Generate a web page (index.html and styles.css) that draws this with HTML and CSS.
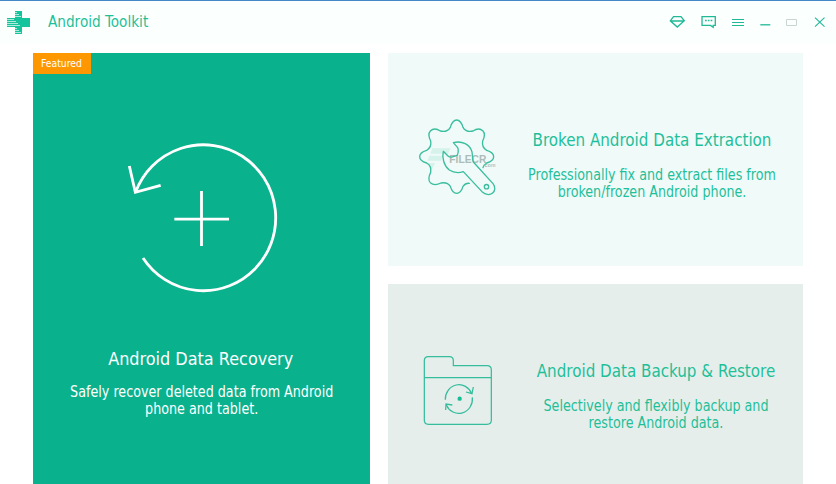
FILE: index.html
```html
<!DOCTYPE html>
<html lang="en">
<head>
<meta charset="utf-8">
<title>Android Toolkit</title>
<link rel="stylesheet" href="styles.css">
</head>
<body>
<div class="window">
  <header class="titlebar">
    <svg class="logo" viewBox="0 0 24 24">
      <path fill="#15c39c" d="M8 0h7v7h8v9h-8v7H8v-7H0V7h8z"/>
      <path fill="none" stroke="#d5f5ec" stroke-width=".8" d="M8 1.500h2M8 3.500h4M8 5.500h6M0 8.500h7M0 10.500h9M0 12.500h11M0 14.500h13M8 17.500h2M8 19.500h4M8 21.500h6"/>
    </svg>
    <span class="app-name">Android Toolkit</span>
    <svg class="controls" viewBox="0 0 186 48">
      <g fill="none" stroke="#20b997" stroke-width="1.3">
        <path d="M23.500 16.700h7.500l3.300 4.100-7 6.300-7-6.300zM21 21h12.700"/>
        <path d="M52 16.600h13.300v8.800h-2.100v1.800l-2.700-1.800H52z"/>
        <path stroke-width="1.500" stroke-dasharray="1.7 1.1" d="M55 20.500h7.500"/>
        <path stroke-width="1.2" d="M82 19.500h12M82 22.500h12M82 25.500h12"/>
        <path d="M110.300 24.800h10"/>
        <path stroke="#c8d5d1" stroke-width="1" d="M136.500 19.500h10v6h-10z"/>
        <path stroke-width="1.1" d="M165 17.600l9.500 9M174.500 17.600l-9.500 9"/>
      </g>
    </svg>
  </header>
  <main class="tools">
    <section class="card recovery">
      <span class="badge">Featured</span>
      <svg class="recovery-icon" viewBox="0 0 570 525">
        <g fill="none" stroke="#fff" stroke-width="8.500">
          <path d="M77 186A217 219 0 1 1 99 384"/>
          <path d="M58 108L76 187L152 166"/>
          <path d="M193 267.500H357M274.500 183V348"/>
        </g>
      </svg>
      <h2>Android Data Recovery</h2>
      <p>Safely recover deleted data from Android<br>phone and tablet.</p>
    </section>
    <div class="side">
      <section class="card extraction">
        <svg class="extraction-icon" viewBox="0 0 360 300">
          <path fill="#d5f3ea" d="M97 115h55l-8 16H91zM88 137h43l-7 15H82zM82 159h23l-9 19z"/>
          <text class="mark" x="148" y="159" textLength="111" lengthAdjust="spacingAndGlyphs">FILECR</text>
          <text class="mark-small" x="249" y="172" textLength="37">.com</text>
          <g fill="none" stroke="#3abe9e" stroke-width="4" stroke-linejoin="round" stroke-linecap="round">
            <path d="M208 220C200 219 194 222 189 229C186 239 182 250 170 250C158 250 154 239 151 229C145 220 133 217 123 219C113 224 101 227 91 218C82 208 87 197 92 187C94 176 90 165 80 159C70 156 59 151 59 140C59 129 70 124 80 121C90 115 94 104 92 93C87 83 83 72 91 63C100 54 112 57 121 63C133 66 145 62 151 52C154 42 158 30 170 30C182 30 186 42 189 52C195 62 207 66 219 63C228 57 240 54 249 63C257 72 253 83 248 93C246 104 250 115 260 121C270 124 281 129 281 140C281 151 270 156 260 159C254 163 250 168 249 173"/>
            <path d="M160 98C186 91 210 103 216 126C218 138 217 147 220 156L279 221C287 231 286 243 277 250C268 257 255 253 248 247L190 185C177 189 162 189 148 180C132 168 125 143 130 124L144 138C149 143 158 142 162 139L171 136C175 132 176 119 173 113Z"/>
            <circle cx="259.500" cy="230" r="6.500"/>
          </g>
        </svg>
        <div class="copy">
          <h2>Broken Android Data Extraction</h2>
          <p>Professionally fix and extract files from<br>broken/frozen Android phone.</p>
        </div>
      </section>
      <section class="card backup">
        <svg class="backup-icon" viewBox="0 0 300 270">
          <g fill="none" stroke="#36bd9d" stroke-width="3.800">
            <path d="M43 226V47Q43 35 55 35H118Q130 35 130 47V62H231Q244 62 244 75V226Q244 238 231 238H55Q43 238 43 226ZM43 98H244"/>
            <path d="M106 164A41 43 0 0 1 185 146M187 157A41 43 0 0 1 109 180"/>
            <path d="M168 141L186 146L190 126M127 180L108 177L107 195"/>
          </g>
          <circle cx="149" cy="161" r="6.500" fill="#15bd92"/>
        </svg>
        <div class="copy">
          <h2>Android Data Backup &amp; Restore</h2>
          <p>Selectively and flexibly backup and<br>restore Android data.</p>
        </div>
      </section>
    </div>
  </main>
</div>
</body>
</html>
```
FILE: styles.css
```css
* { box-sizing: border-box; }
body {
  margin: 0;
  font-family: "DejaVu Sans Condensed", "DejaVu Sans", sans-serif;
  font-stretch: condensed;
  color: #1fbf99;
  background: #fff;
}
svg { display: block; flex: none; }
.window {
  height: 484px;
  overflow: hidden;
  border-top: 1px solid #4488c8;
}
.titlebar {
  display: flex;
  height: 43px;
  padding-left: 7px;
  background: #fbfffe;
}
.logo { width: 24px; height: 24px; margin-top: 10px; }
.app-name {
  margin-left: 17px;
  font-size: 15px;
  line-height: 43px;
  white-space: nowrap;
  transform: scaleX(1.01);
  transform-origin: left;
}
.controls { width: 186px; height: 48px; margin: -1px 0 0 auto; }
.tools {
  display: grid;
  grid-template-columns: 337.400px 414.600px;
  column-gap: 18px;
  padding: 9px 33px 0;
}
.card { text-align: center; }
.recovery {
  height: 440px;
  color: #fff;
  background: #09b18d;
}
.badge {
  display: block;
  width: 58px;
  height: 21px;
  padding-right: 1px;
  font-size: 10.300px;
  line-height: 21px;
  background: #ff9800;
}
.recovery-icon { width: 190px; height: 175px; margin: 56px 0 0 77px; }
h2, p { margin: 0; font-weight: 400; white-space: nowrap; }
h2 { font-size: 18px; line-height: 24px; }
p { font-size: 15px; line-height: 17.400px; transform: scaleX(.943); }
.recovery h2 { margin-top: 41px; transform: translate(-1px, 0.500px) scaleX(.992); }
.recovery p { margin-top: 14px; }
.side { display: grid; grid-template-rows: 213px 213px; row-gap: 18px; }
.extraction, .backup { display: flex; }
.extraction { background: #effaf9; }
.backup { background: #e5eeeb; }
.extraction-icon { width: 120px; height: 100px; margin: 57px 0 0 11.600px; }
.backup-icon { width: 100px; height: 90px; margin: 61px 14px 0 21.600px; }
.copy { width: 304px; margin: 0 -20px; padding-top: 75px; }
.copy h2 { font-size: 17px; transform: scaleX(.99); }
.copy p { margin-top: 15px; }
.mark { font: 700 33px "Liberation Sans", sans-serif; fill: #adbcb8; }
.mark-small { font: 16px "Liberation Sans", sans-serif; fill: #93a5a0; }
```
